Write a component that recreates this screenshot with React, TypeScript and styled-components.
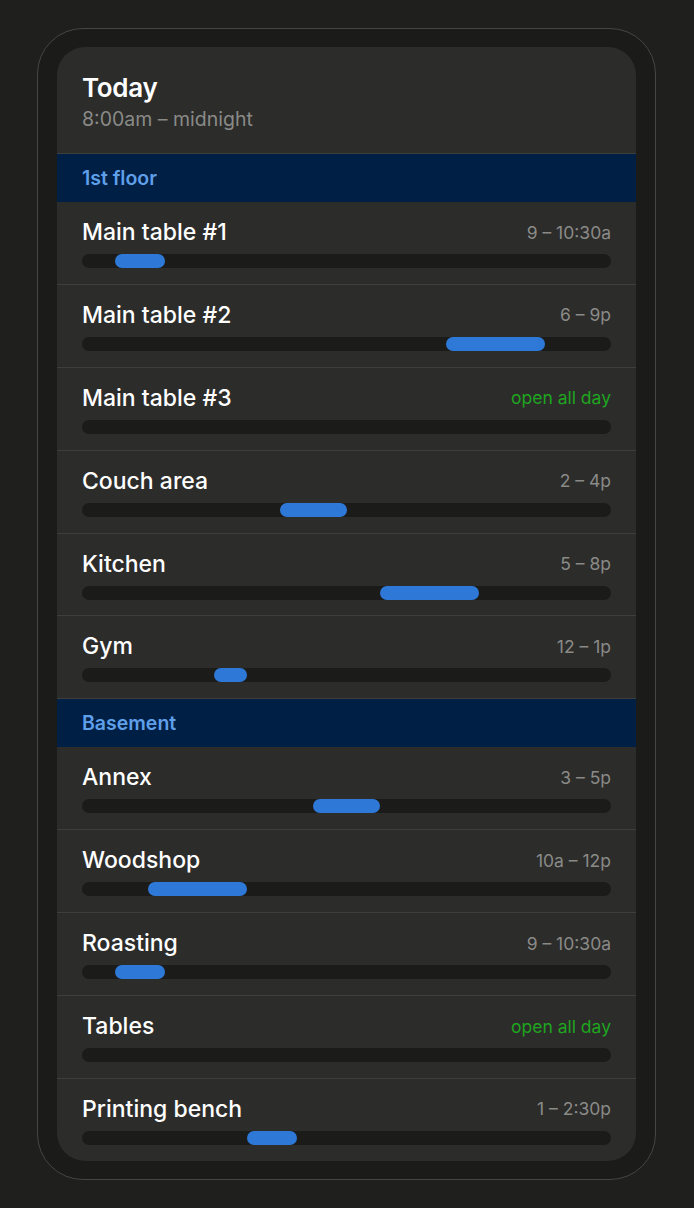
import styled, { createGlobalStyle } from 'styled-components';

const HOURS = 16; // 8am to midnight

const GlobalStyle = createGlobalStyle`
  html, body {
    margin: 0;
    padding: 0;
    background: #1f1f1e;
  }
  body {
    font-family: Inter, "Noto Sans", sans-serif;
    -webkit-font-smoothing: antialiased;
  }
`;

const Frame = styled.div`
  box-sizing: border-box;
  width: 619px;
  margin: 28px 0 0 37px;
  padding: 18px 19px;
  border: 1px solid #464644;
  border-radius: 46px;
  background: #1b1b1a;
`;

const Card = styled.div`
  background: #2c2c2b;
  border-radius: 28px;
  overflow: hidden;
`;

const Header = styled.div`
  padding: 25px 25px 22px;
  border-bottom: 1px solid #3e3e3c;
`;

const Title = styled.h1`
  margin: 0;
  font-size: 26px;
  line-height: 32px;
  font-weight: 600;
  color: #ffffff;
  letter-spacing: -0.3px;
`;

const Subtitle = styled.div`
  margin-top: 3px;
  font-size: 19.5px;
  line-height: 24px;
  color: #8a8a87;
`;

const SectionHeader = styled.div`
  height: 48px;
  display: flex;
  align-items: center;
  padding: 0 25px;
  background: #001f44;
  color: #5f9fea;
  font-size: 19.5px;
  font-weight: 600;
`;

const Row = styled.div<{ $last?: boolean }>`
  padding: 16px 25px 15.9px;
  border-bottom: ${({ $last }) => ($last ? 'none' : '1px solid #3e3e3c')};
`;

const RowTop = styled.div`
  display: flex;
  justify-content: space-between;
  align-items: center;
  height: 28px;
  margin-bottom: 8px;
`;

const Name = styled.div`
  font-size: 23px;
  font-weight: 500;
  color: #ffffff;
`;

const Time = styled.div<{ $open?: boolean }>`
  font-size: 17.5px;
  color: ${({ $open }) => ($open ? '#1fa51f' : '#8a8a87')};
`;

const Track = styled.div`
  position: relative;
  height: 14px;
  border-radius: 7px;
  background: #1b1b1a;
`;

const Booking = styled.div`
  position: absolute;
  top: 0;
  bottom: 0;
  border-radius: 7px;
  background: #2e78d8;
`;

interface Space {
  name: string;
  label: string;
  start?: number;
  end?: number;
}

const sections: { title: string; spaces: Space[] }[] = [
  {
    title: '1st floor',
    spaces: [
      { name: 'Main table #1', label: '9 – 10:30a', start: 1, end: 2.5 },
      { name: 'Main table #2', label: '6 – 9p', start: 11, end: 14 },
      { name: 'Main table #3', label: 'open all day' },
      { name: 'Couch area', label: '2 – 4p', start: 6, end: 8 },
      { name: 'Kitchen', label: '5 – 8p', start: 9, end: 12 },
      { name: 'Gym', label: '12 – 1p', start: 4, end: 5 },
    ],
  },
  {
    title: 'Basement',
    spaces: [
      { name: 'Annex', label: '3 – 5p', start: 7, end: 9 },
      { name: 'Woodshop', label: '10a – 12p', start: 2, end: 5 },
      { name: 'Roasting', label: '9 – 10:30a', start: 1, end: 2.5 },
      { name: 'Tables', label: 'open all day' },
      { name: 'Printing bench', label: '1 – 2:30p', start: 5, end: 6.5 },
    ],
  },
];

const App = () => {
  return (
    <>
      <GlobalStyle />
      <Frame>
        <Card>
          <Header>
            <Title>Today</Title>
            <Subtitle>8:00am – midnight</Subtitle>
          </Header>
          {sections.map((section, si) => (
            <div key={section.title}>
              <SectionHeader>{section.title}</SectionHeader>
              {section.spaces.map((space, i) => {
                const open = space.start === undefined;
                const last = si === sections.length - 1 && i === section.spaces.length - 1;
                return (
                  <Row key={space.name} $last={last}>
                    <RowTop>
                      <Name>{space.name}</Name>
                      <Time $open={open}>{space.label}</Time>
                    </RowTop>
                    <Track>
                      {!open && (
                        <Booking
                          style={{
                            left: `${(space.start! / HOURS) * 100}%`,
                            width: `${((space.end! - space.start!) / HOURS) * 100}%`,
                          }}
                        />
                      )}
                    </Track>
                  </Row>
                );
              })}
            </div>
          ))}
        </Card>
      </Frame>
    </>
  );
};

export default App;
